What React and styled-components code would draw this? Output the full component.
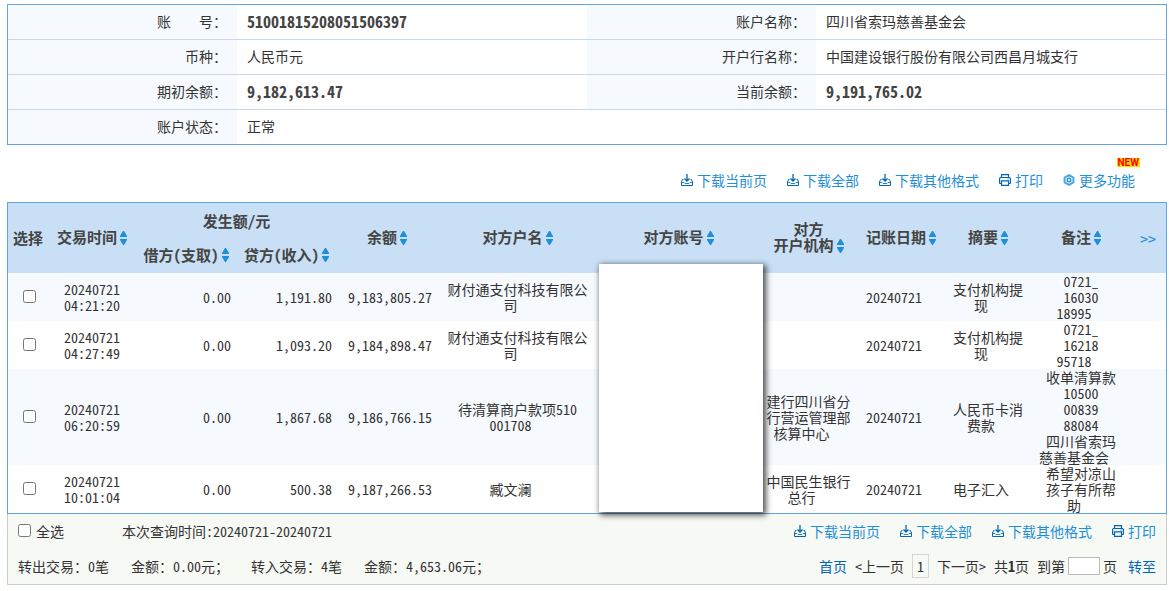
import React, { useState } from 'react';
import styled, { createGlobalStyle } from 'styled-components';

const GlobalStyle = createGlobalStyle`
  * {
    box-sizing: border-box;
  }
  body {
    margin: 0;
    background: #fff;
    color: #333;
    font-family: 'Noto Sans Mono CJK SC', 'Noto Sans CJK SC', 'Liberation Mono', monospace;
    font-size: 14px;
    line-height: 16px;
  }
  a {
    color: inherit;
    text-decoration: none;
  }
`;

const Page = styled.main`
  padding: 4px 2px 6px 7px;
`;

const InfoTable = styled.table`
  width: 100%;
  table-layout: fixed;
  border: 1px solid #5fa5df;
  border-spacing: 0;
`;

const InfoRow = styled.tr`
  & + & > * {
    border-top: 1px solid #c8d8e8;
  }
  &:first-child > * {
    height: 34px;
  }
`;

const InfoLabel = styled.th`
  width: 229px;
  height: 35px;
  padding: 0 10px 2px 0;
  background: #f6fafe;
  font-weight: 400;
  text-align: right;
  white-space: pre;
`;

const InfoValue = styled.td`
  padding: 0 10px 2px;
  color: ${(props) => (props.$strong ? '#444' : '#333')};
  font-size: ${(props) => (props.$strong ? '16px' : '14px')};
  font-weight: ${(props) => (props.$strong ? 700 : 400)};
`;

const Toolbar = styled.div`
  display: flex;
  justify-content: flex-end;
  align-items: center;
  gap: 20px;
  padding: ${(props) => (props.$top ? '27px 32px 14px 0' : '0')};
`;

const ToolLink = styled.a`
  position: relative;
  display: flex;
  align-items: center;
  gap: 4px;
  color: #1e8fd8;
  white-space: nowrap;
`;

const NewBadge = styled.span`
  position: absolute;
  right: -5px;
  top: -14px;
  padding: 0 1px;
  background: #ffe000;
  color: #f00;
  font-family: Roboto, sans-serif;
  font-size: 10px;
  font-weight: 700;
  line-height: 9px;
`;

const DealTable = styled.table`
  width: 100%;
  table-layout: fixed;
  border: 1px solid #5fa5df;
  border-spacing: 0;
`;

const Head = styled.thead`
  background: #c8dff5;
`;

const HeadCell = styled.th`
  height: 35px;
  padding: 0;
  color: #444;
  font-size: 15px;
  font-weight: 700;
  text-align: center;
  white-space: pre-line;
`;

const SortButton = styled.button`
  height: 16px;
  padding: 0 0 2px;
  margin: 0 0 0 3px;
  border: 0;
  background: none;
  vertical-align: middle;
  cursor: pointer;
  svg {
    display: block;
  }
`;

const MoreLink = styled.a`
  color: #1e8fd8;
  font-size: 16px;
  font-weight: 400;
`;

const DealRow = styled.tr`
  background: #fff;
  &:nth-child(odd) {
    background: #f6fafe;
  }
`;

const Cell = styled.td`
  position: relative;
  height: 48px;
  padding: 0 ${(props) => (props.$right ? '5px' : '0')};
  text-align: ${(props) => (props.$right ? 'right' : 'center')};
  white-space: pre-line;
`;

const Mask = styled.div`
  position: absolute;
  left: 1px;
  top: -9px;
  z-index: 1;
  width: calc(100% + 3px);
  height: 248px;
  background: #fff;
  box-shadow: 2px 2px 6px 1px rgba(0, 0, 0, 0.7);
`;

const Checkbox = styled.input.attrs({ type: 'checkbox' })`
  display: block;
  width: 13px;
  height: 13px;
  margin: 0;
`;

const RowCheckbox = styled(Checkbox)`
  margin: 0 auto 2px 15px;
`;

const Footer = styled.footer`
  padding: 0 10px;
  border: 1px solid #ccc;
  border-top: 0;
  background: #f7f9f5;
`;

const FooterRow = styled.div`
  display: flex;
  justify-content: space-between;
  align-items: center;
  height: 35px;
  padding-bottom: 2px;
  white-space: nowrap;
`;

const FooterLeft = styled.div`
  display: flex;
  align-items: center;
  gap: ${(props) => props.$gap};
`;

const AllLabel = styled.label`
  display: flex;
  align-items: center;
  gap: 5px;
`;

const Pager = styled.nav`
  display: flex;
  align-items: center;
  gap: 8px;
`;

const PagerLink = styled.a`
  color: ${(props) => (props.$plain ? '#333' : '#0066b3')};
`;

const CurrentPage = styled.span`
  padding: 3px 4px;
  border: 1px solid #d5d5d5;
  line-height: 16px;
`;

const JumpLabel = styled.label`
  display: flex;
  align-items: center;
  gap: 3px;
  margin-right: 3px;
`;

const JumpInput = styled.input`
  width: 32px;
  height: 18px;
  padding: 0 2px;
  border: 1px solid #bbb;
  background: #fff;
  font: inherit;
`;

const DownloadIcon = () => (
  <svg width="12" height="12" viewBox="0 0 12 12" fill="none" stroke="#0066b3">
    <path d="M2.5 5.5H1.5L.5 8V11.5H11.5V8L10.5 5.5H9.5" />
    <path d="M.5 8.5H3L4 9.5H8L9 8.5H11.5" strokeWidth=".8" />
    <path d="M6 0V7M3.5 4.5L6 7L8.5 4.5" strokeWidth="1.3" />
  </svg>
);

const PrintIcon = () => (
  <svg width="12" height="12" viewBox="0 0 12 12" fill="none" stroke="#0066b3" strokeWidth="1.2">
    <path d="M2.5 3.5V.6H9.5V3.5M2.5 9.5H1L.6 9V4.5L1.4 3.5H10.6L11.4 4.5V9L11 9.5H9.5" />
    <path d="M2.5 6.8H9.5V11.4H2.5ZM8.5 5H9.5" />
  </svg>
);

const GearIcon = () => (
  <svg width="12" height="12" viewBox="0 0 12 12" fill="none" stroke="#4aa6df">
    <path d="M6 1.2L10.4 3.6V8.4L6 10.8L1.6 8.4V3.6Z" strokeWidth="2" strokeLinejoin="round" />
    <circle cx="6" cy="6" r="1.8" stroke="#1e8fd8" strokeWidth="1.4" />
  </svg>
);

const Sort = ({ label }) => (
  <SortButton type="button" aria-label={`${label}排序`}>
    <svg width="7" height="14" viewBox="0 0 7 14" fill="#1e8fd8">
      <path d="M3 0H4L7 5V6H0V5ZM0 8H7V9L4 14H3L0 9Z" />
    </svg>
  </SortButton>
);

const tools = [
  { text: '下载当前页', Icon: DownloadIcon },
  { text: '下载全部', Icon: DownloadIcon },
  { text: '下载其他格式', Icon: DownloadIcon },
  { text: '打印', Icon: PrintIcon },
];

const info = [
  [
    { label: '账    号：', value: '51001815208051506397', strong: true },
    { label: '账户名称：', value: '四川省索玛慈善基金会' },
  ],
  [
    { label: '币种：', value: '人民币元' },
    { label: '开户行名称：', value: '中国建设银行股份有限公司西昌月城支行' },
  ],
  [
    { label: '期初余额：', value: '9,182,613.47', strong: true },
    { label: '当前余额：', value: '9,191,765.02', strong: true },
  ],
  [{ label: '账户状态：', value: '正常' }],
];

// null lets the column share the remaining width
const columns = [40, 88, 100, 101, 100, null, null, 99, 86, 88, 98, 36];

const deals = [
  {
    time: '20240721\n04:21:20',
    debit: '0.00',
    credit: '1,191.80',
    balance: '9,183,805.27',
    name: '财付通支付科技有限公\n司\u00a0\u00a0',
    org: '',
    date: '20240721\u00a0\u00a0',
    summary: '支付机构提\n现\u00a0\u00a0',
    remark: '0721_\n16030\n18995\u00a0\u00a0',
  },
  {
    time: '20240721\n04:27:49',
    debit: '0.00',
    credit: '1,093.20',
    balance: '9,184,898.47',
    name: '财付通支付科技有限公\n司\u00a0\u00a0',
    org: '',
    date: '20240721\u00a0\u00a0',
    summary: '支付机构提\n现\u00a0\u00a0',
    remark: '0721_\n16218\n95718\u00a0\u00a0',
  },
  {
    time: '20240721\n06:20:59',
    debit: '0.00',
    credit: '1,867.68',
    balance: '9,186,766.15',
    name: '待清算商户款项510\n001708\u00a0\u00a0',
    org: '建行四川省分\n行营运管理部\n核算中心\u00a0\u00a0',
    date: '20240721\u00a0\u00a0',
    summary: '人民币卡消\n费款\u00a0\u00a0',
    remark: '收单清算款\n10500\n00839\n88084\n四川省索玛\n慈善基金会\u00a0\u00a0',
  },
  {
    time: '20240721\n10:01:04',
    debit: '0.00',
    credit: '500.38',
    balance: '9,187,266.53',
    name: '臧文澜\u00a0\u00a0',
    org: '中国民生银行\n总行\u00a0\u00a0',
    date: '20240721\u00a0\u00a0',
    summary: '电子汇入\u00a0\u00a0',
    remark: '希望对凉山\n孩子有所帮\n助\u00a0\u00a0',
  },
];

const ToolLinks = () =>
  tools.map(({ text, Icon }) => (
    <ToolLink key={text} href="#">
      <Icon />
      {text}
    </ToolLink>
  ));

const SortHead = ({ label, ...rest }) => (
  <HeadCell {...rest}>
    {label}
    <Sort label={label} />
  </HeadCell>
);

const App = () => {
  const [checked, setChecked] = useState([]);
  const [page, setPage] = useState('');

  function toggle(i) {
    setChecked(checked.includes(i) ? checked.filter((c) => c !== i) : [...checked, i]);
  }

  function toggleAll(e) {
    setChecked(e.target.checked ? deals.map((d, i) => i) : []);
  }

  return (
    <Page>
      <GlobalStyle />
      <InfoTable>
        <tbody>
          {info.map((row) => (
            <InfoRow key={row[0].label}>
              {row.map(({ label, value, strong }) => (
                <React.Fragment key={label}>
                  <InfoLabel scope="row">{label}</InfoLabel>
                  <InfoValue $strong={strong} colSpan={row.length === 1 ? 3 : 1}>
                    {value}
                  </InfoValue>
                </React.Fragment>
              ))}
            </InfoRow>
          ))}
        </tbody>
      </InfoTable>

      <Toolbar $top>
        <ToolLinks />
        <ToolLink href="#">
          <GearIcon />
          更多功能
          <NewBadge>NEW</NewBadge>
        </ToolLink>
      </Toolbar>

      <DealTable>
        <colgroup>
          {columns.map((width, i) => (
            <col key={i} width={width || undefined} />
          ))}
        </colgroup>
        <Head>
          <tr>
            <HeadCell rowSpan={2}>选择</HeadCell>
            <SortHead rowSpan={2} label="交易时间" />
            <HeadCell colSpan={2}>发生额/元</HeadCell>
            <SortHead rowSpan={2} label="余额" />
            <SortHead rowSpan={2} label="对方户名" />
            <SortHead rowSpan={2} label="对方账号" />
            <SortHead rowSpan={2} label={'对方\n开户机构'} />
            <SortHead rowSpan={2} label="记账日期" />
            <SortHead rowSpan={2} label="摘要" />
            <SortHead rowSpan={2} label="备注" />
            <HeadCell rowSpan={2}>
              <MoreLink href="#">&gt;&gt;</MoreLink>
            </HeadCell>
          </tr>
          <tr>
            <SortHead label="借方(支取)" />
            <SortHead label="贷方(收入)" />
          </tr>
        </Head>
        <tbody>
          {deals.map((deal, i) => (
            <DealRow key={deal.time}>
              <Cell>
                <RowCheckbox
                  aria-label="选择"
                  checked={checked.includes(i)}
                  onChange={() => toggle(i)}
                />
              </Cell>
              <Cell>{deal.time}</Cell>
              <Cell $right>{deal.debit}</Cell>
              <Cell $right>{deal.credit}</Cell>
              <Cell $right>{deal.balance}</Cell>
              <Cell>{deal.name}</Cell>
              <Cell>{i === 0 ? <Mask /> : null}</Cell>
              <Cell>{deal.org}</Cell>
              <Cell>{deal.date}</Cell>
              <Cell>{deal.summary}</Cell>
              <Cell>{deal.remark}</Cell>
              <Cell />
            </DealRow>
          ))}
        </tbody>
      </DealTable>

      <Footer>
        <FooterRow>
          <FooterLeft $gap="58px">
            <AllLabel>
              <Checkbox checked={checked.length === deals.length} onChange={toggleAll} />
              全选
            </AllLabel>
            <span>本次查询时间:20240721-20240721</span>
          </FooterLeft>
          <Toolbar>
            <ToolLinks />
          </Toolbar>
        </FooterRow>
        <FooterRow>
          <FooterLeft $gap="22px">
            <span>转出交易：0笔</span>
            <span>金额：0.00元；</span>
            <span>转入交易：4笔</span>
            <span>金额：4,653.06元；</span>
          </FooterLeft>
          <Pager>
            <PagerLink href="#">首页</PagerLink>
            <PagerLink $plain href="#">&lt;上一页</PagerLink>
            <CurrentPage>1</CurrentPage>
            <PagerLink $plain href="#">下一页&gt;</PagerLink>
            <span>
              共<b>1</b>页
            </span>
            <JumpLabel>
              到第
              <JumpInput type="text" value={page} onChange={(e) => setPage(e.target.value)} />
              页
            </JumpLabel>
            <PagerLink href="#">转至</PagerLink>
          </Pager>
        </FooterRow>
      </Footer>
    </Page>
  );
};

export default App;
